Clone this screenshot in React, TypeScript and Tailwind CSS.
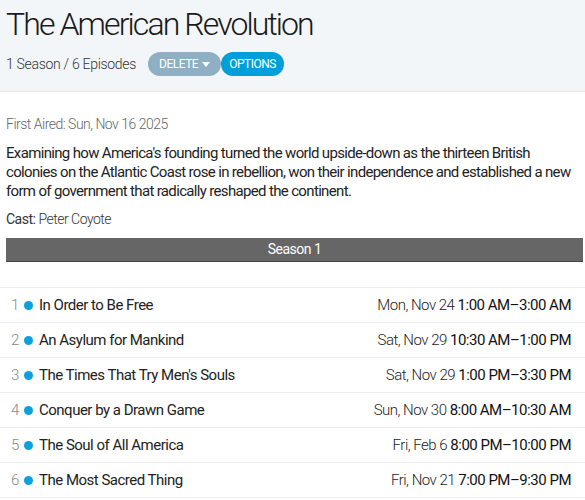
const EPISODES = [
  { n: 1, title: 'In Order to Be Free', date: 'Mon, Nov 24', time: '1:00 AM–3:00 AM' },
  { n: 2, title: 'An Asylum for Mankind', date: 'Sat, Nov 29', time: '10:30 AM–1:00 PM' },
  { n: 3, title: "The Times That Try Men's Souls", date: 'Sat, Nov 29', time: '1:00 PM–3:30 PM' },
  { n: 4, title: 'Conquer by a Drawn Game', date: 'Sun, Nov 30', time: '8:00 AM–10:30 AM' },
  { n: 5, title: 'The Soul of All America', date: 'Fri, Feb 6', time: '8:00 PM–10:00 PM' },
  { n: 6, title: 'The Most Sacred Thing', date: 'Fri, Nov 21', time: '7:00 PM–9:30 PM' },
]

export default function App() {
  return (
    <div className="w-[585px] h-[500px] overflow-hidden bg-white text-[#222] font-['Roboto',sans-serif] tracking-[-0.5px]">
      {/* Header */}
      <header className="h-[92px] bg-[#f3f6f8] border-b border-[#e4e8eb] px-[6px] pt-[4px]">
        <h1 className="text-[32px] leading-[40px] font-light tracking-[-1.9px] text-[#1a1a1a]">The American Revolution</h1>
        <div className="flex items-center mt-[8px]">
          <span className="text-[14px] font-light tracking-[-0.3px] text-[#333] mr-[12px]">1 Season / 6 Episodes</span>
          <button className="flex items-center gap-[4px] h-[24px] px-[11px] rounded-full bg-[#8fb0c4] text-white text-[12px] uppercase">
            Delete
            <svg width="8" height="5" viewBox="0 0 8 5"><path d="M0 0h8L4 5z" fill="white" /></svg>
          </button>
          <button className="h-[24px] px-[8px] rounded-full bg-[#009fdb] text-white text-[12px] uppercase">Options</button>
        </div>
      </header>

      {/* Details */}
      <section className="pl-[6px] pr-[2px] pt-[22px]">
        <p className="text-[14px] font-light text-[#666]">First Aired: Sun, Nov 16 2025</p>
        <p className="mt-[9px] text-[15px] leading-[19px] tracking-[-0.66px] whitespace-nowrap text-[#222]">
          Examining how America's founding turned the world upside-down as the thirteen British
          <br />
          colonies on the Atlantic Coast rose in rebellion, won their independence and established a new
          <br />
          form of government that radically reshaped the continent.
        </p>
        <p className="mt-[8px] text-[14px] text-[#333]">
          Cast: <span className="font-light">Peter Coyote</span>
        </p>
        <div className="mt-[8px] h-[24px] bg-[#666] border-b border-[#444] text-white text-[14px] flex items-center justify-center">Season 1</div>
      </section>

      {/* Episodes */}
      <ul className="mt-[25px] border-t border-[#eee]">
        {EPISODES.map(ep => (
          <li key={ep.n} className="h-[35px] border-b border-[#eee] flex items-center pl-[11px] pr-[14px] text-[15px]">
            <span className="w-[13px] text-[#888] font-light">{ep.n}</span>
            <span className="w-[9px] h-[9px] rounded-full bg-[#0ea0dc] mr-[6px]" />
            <span className="text-[#222]">{ep.title}</span>
            <span className="ml-auto font-light text-[#222]">{ep.date} <span className="font-normal text-[#111]">{ep.time}</span></span>
          </li>
        ))}
      </ul>
    </div>
  )
}
